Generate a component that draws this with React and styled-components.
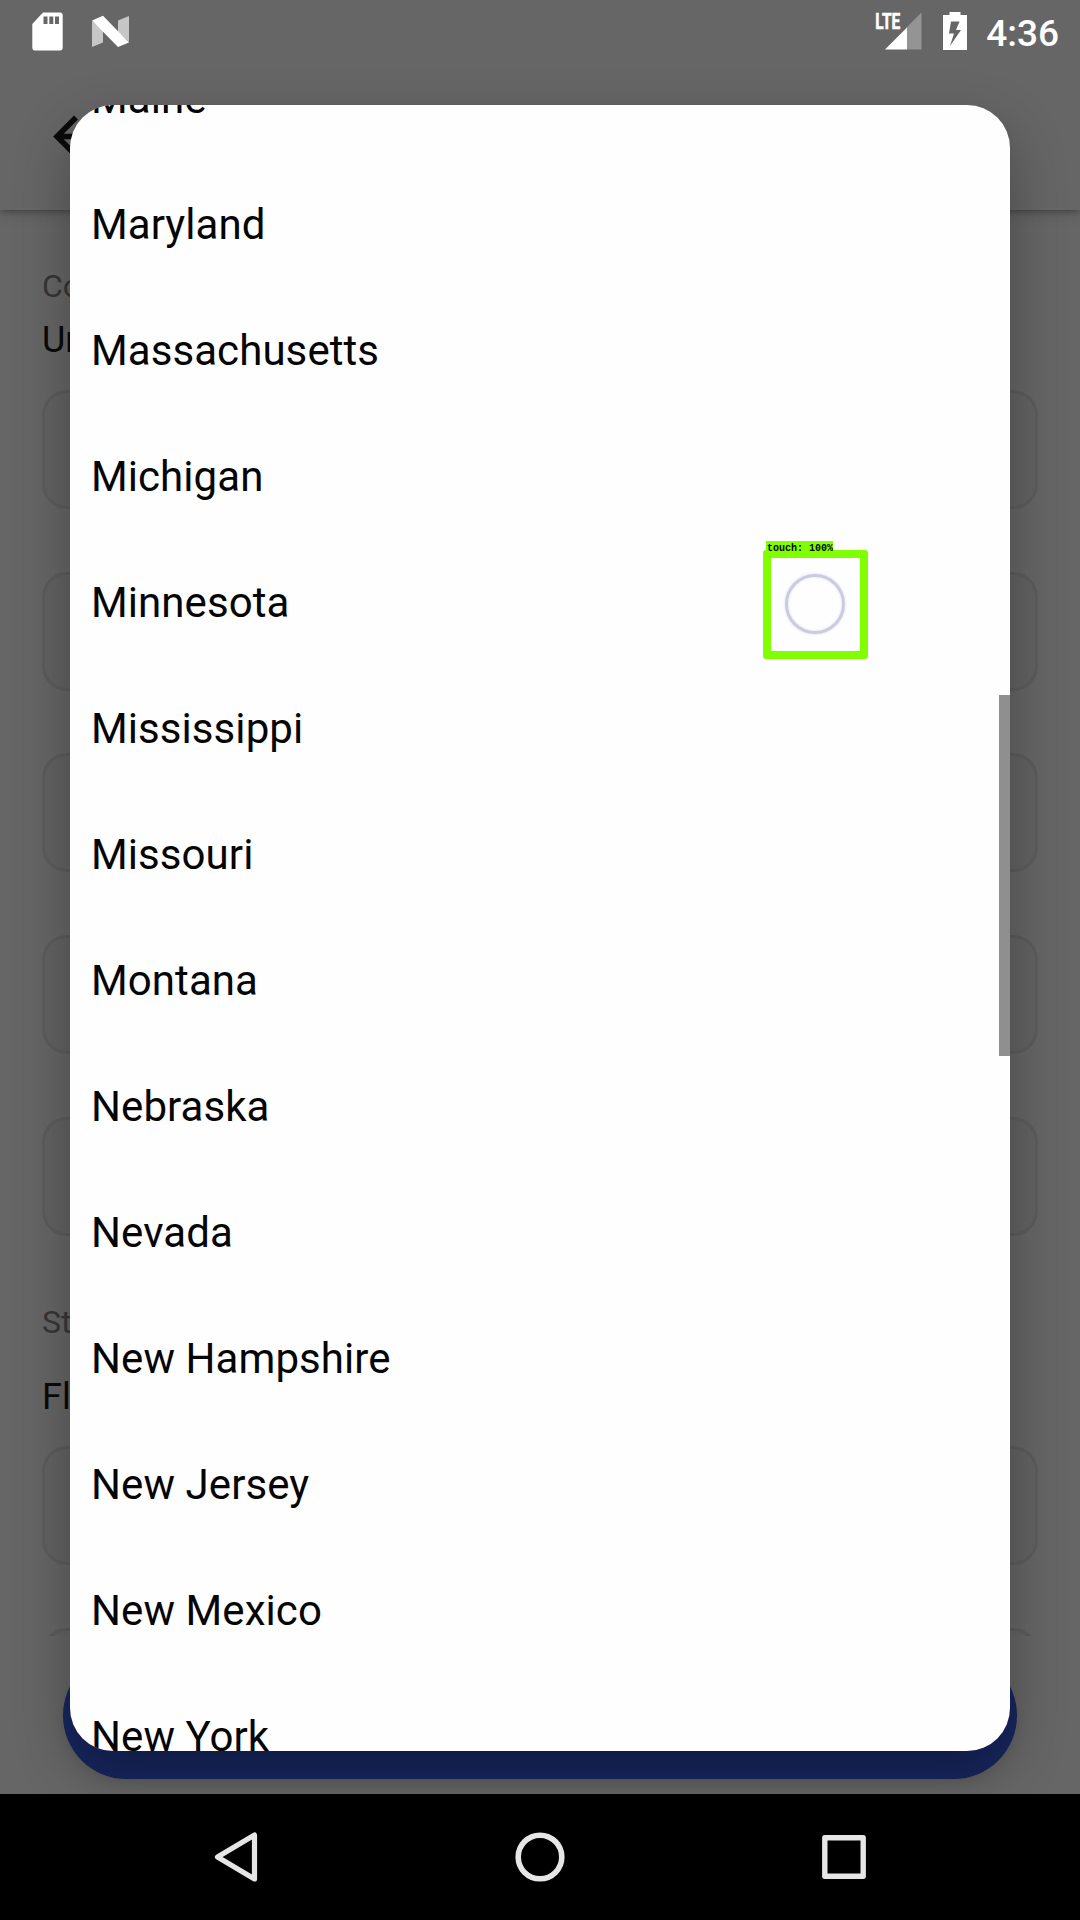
import React from "react";
import styled, { createGlobalStyle } from "styled-components";

const Global = createGlobalStyle`
  * { box-sizing: border-box; }
  html, body { margin: 0; padding: 0; background: #000; }
  body { font-family: Roboto, "Noto Sans", sans-serif; overflow: hidden; }
  svg { display: block; }
`;

const Screen = styled.div`
  position: relative;
  display: flex;
  flex-direction: column;
  width: 1080px;
  height: 1920px;
  overflow: hidden;
`;

const Page = styled.main`
  display: flex;
  flex-direction: column;
  height: 1794px;
  background: #666;
  overflow: hidden;
`;

const AppBar = styled.header`
  position: relative;
  z-index: 1;
  flex: none;
  height: 210px;
  padding: 100px 0 0 41px;
  background: #666;
  box-shadow: 0 2px 5px rgba(0, 0, 0, 0.22), 0 5px 12px rgba(0, 0, 0, 0.12);
`;

const Form = styled.section`
  display: flex;
  flex-direction: column;
  flex: none;
  height: 1426px;
  padding: 57px 42px 0;
  overflow: hidden;
`;

const Label = styled.div`
  flex: none;
  margin-top: ${(p) => p.$top || 0}px;
  height: 38px;
  line-height: 38px;
  font-size: 32px;
  color: #363636;
`;

const Value = styled.div`
  flex: none;
  margin-top: ${(p) => p.$top}px;
  height: 42px;
  line-height: 42px;
  font-size: 36px;
  color: #0a0a0a;
`;

const Field = styled.div`
  flex: none;
  height: 119px;
  margin-top: ${(p) => p.$top}px;
  border: 3px solid #5d5d5d;
  border-radius: 25px;
  background: #636363;
`;

const Footer = styled.footer`
  flex: 1;
  padding: 16px 63px 0;
`;

const Submit = styled.div`
  height: 127px;
  border-radius: 64px;
  background: #17265f;
  box-shadow: 0 3px 10px rgba(0, 0, 0, 0.08);
`;

const StatusBar = styled.div`
  position: absolute;
  inset: 0 0 auto;
  height: 72px;
  display: flex;
  justify-content: space-between;
  padding: 0 21px 0 32px;
  z-index: 3;
`;

const StatusGroup = styled.div`
  display: flex;
`;

const Clock = styled.div`
  margin-left: 18px;
  font-size: 37px;
  font-weight: 500;
  line-height: 68px;
  color: #fff;
`;

const Dialog = styled.div`
  position: absolute;
  z-index: 2;
  left: 70px;
  top: 105px;
  width: 940px;
  height: 1646px;
  border-radius: 43px;
  background: #fefefe;
  box-shadow: 0 22px 56px rgba(0, 0, 0, 0.3);
`;

const List = styled.div`
  display: flex;
  flex-direction: column;
  height: 100%;
  border-radius: inherit;
  overflow: hidden;
`;

const Option = styled.div`
  flex: none;
  height: 126px;
  padding-left: 21px;
  line-height: 126px;
  font-size: 42px;
  letter-spacing: 0.08px;
  color: #050505;

  &:first-child {
    margin-top: -69px;
  }
`;

const ScrollThumb = styled.div`
  position: absolute;
  right: 0;
  top: 590px;
  width: 11px;
  height: 361px;
  background: #8f8f8f;
`;

const TouchMark = styled.div`
  position: absolute;
  z-index: 4;
  left: 763px;
  top: 550px;
  width: 105px;
  height: 109px;
  padding: 0 1px 1px 0;
  border: 8px solid #80ff00;
  border-radius: 3px;
  display: flex;
  align-items: center;
  justify-content: center;
`;

const TouchTag = styled.span`
  position: absolute;
  left: -5px;
  top: -17px;
  width: 67px;
  height: 12px;
  padding-left: 1px;
  background: #80ff00;
  color: #000;
  font: bold 10px/15px "Liberation Mono", monospace;
  white-space: pre;
`;

const TouchRing = styled.div`
  width: 60px;
  height: 60px;
  border: 3px solid #cbcbe0;
  border-radius: 50%;
  box-shadow: 0 0 3px #d8d8ee, inset 0 0 3px #e4e4f2;
`;

const NavBar = styled.nav`
  display: flex;
  justify-content: space-between;
  height: 126px;
  padding: 0 204px;
  background: #000;
`;

const SdCard = () => (
  <svg width="32" height="72" viewBox="32 0 32 72">
    <path
      fill="#fff"
      fillRule="evenodd"
      d="M43 12.5H60Q62.7 12.5 62.7 15.5V47.5Q62.7 50.5 60 50.5H35Q32.3 50.5 32.3 47.5V24ZM43.5 16.5V24H47.5V16.5ZM49.3 16.5V24H53.3V16.5ZM55 16.5V24H59V16.5Z"
    />
  </svg>
);

const Nougat = () => (
  <svg width="66" height="72" viewBox="64 0 66 72">
    <path fill="#c6c6c6" d="M92 21L103 30V42.5L92 47ZM118 20.5L129 16V42L118 32Z" />
    <path fill="#fff" d="M92 20.5L103 15.7L129 42.5L118 47Z" />
  </svg>
);

const Signal = () => (
  <svg width="50" height="72" viewBox="874 0 50 72">
    <path fill="#949494" d="M921.5 12.5V49.5H906V28Z" />
    <path fill="#fff" d="M885 49.5L907 27.5V49.5Z" />
    <text
      x="875.3"
      y="29.3"
      fill="#fff"
      stroke="#fff"
      strokeWidth="0.6"
      fontSize="22.5"
      fontWeight="700"
      textLength="25"
      lengthAdjust="spacingAndGlyphs"
    >
      LTE
    </text>
  </svg>
);

const Battery = () => (
  <svg width="44" height="72" viewBox="924 0 44 72">
    <path
      fill="#fff"
      fillRule="evenodd"
      d="M949.5 12H960.5V15H967V50H943V15H949.5ZM951 21.5L949 33.5H954L950 46L961 30H956L959.5 21.5Z"
    />
  </svg>
);

const states = [
  "Maine",
  "Maryland",
  "Massachusetts",
  "Michigan",
  "Minnesota",
  "Mississippi",
  "Missouri",
  "Montana",
  "Nebraska",
  "Nevada",
  "New Hampshire",
  "New Jersey",
  "New Mexico",
  "New York",
];

export default function App() {
  return (
    <Screen>
      <Global />
      <Page>
        <AppBar>
          <svg width="72" height="72" viewBox="41 100 72 72" fill="none" stroke="#0a0a0a" strokeWidth="5.5">
            <path d="M76 117.5L57 136.5L76 155.5M57 136.5H99" />
          </svg>
        </AppBar>
        <Form>
          <Label>Country</Label>
          <Value $top={14}>United States</Value>
          <Field $top={29} />
          <Field $top={62.7} />
          <Field $top={62.7} />
          <Field $top={62.7} />
          <Field $top={62.7} />
          <Label $top={67.2}>State</Label>
          <Value $top={35}>Florida</Value>
          <Field $top={28} />
          <Field $top={63} />
        </Form>
        <Footer>
          <Submit />
        </Footer>
      </Page>
      <NavBar>
        <svg width="66" height="126" viewBox="204 1794 66 126" fill="none" stroke="#e6e6e6" strokeWidth="5.2" strokeLinejoin="round">
          <path d="M217.5 1857L254.5 1835V1879Z" />
        </svg>
        <svg width="66" height="126" viewBox="507 1794 66 126" fill="none" stroke="#e6e6e6" strokeWidth="5.6">
          <circle cx="540" cy="1857" r="21.8" />
        </svg>
        <svg width="66" height="126" viewBox="810 1794 66 126" fill="none" stroke="#e6e6e6" strokeWidth="5.4" strokeLinejoin="round">
          <rect x="824.8" y="1837.8" width="38.4" height="38.4" />
        </svg>
      </NavBar>
      <Dialog>
        <List>
          {states.map((name) => (
            <Option key={name}>{name}</Option>
          ))}
        </List>
        <ScrollThumb />
      </Dialog>
      <TouchMark>
        <TouchTag>touch: 100%</TouchTag>
        <TouchRing />
      </TouchMark>
      <StatusBar>
        <StatusGroup>
          <SdCard />
          <Nougat />
        </StatusGroup>
        <StatusGroup>
          <Signal />
          <Battery />
          <Clock>4:36</Clock>
        </StatusGroup>
      </StatusBar>
    </Screen>
  );
}
